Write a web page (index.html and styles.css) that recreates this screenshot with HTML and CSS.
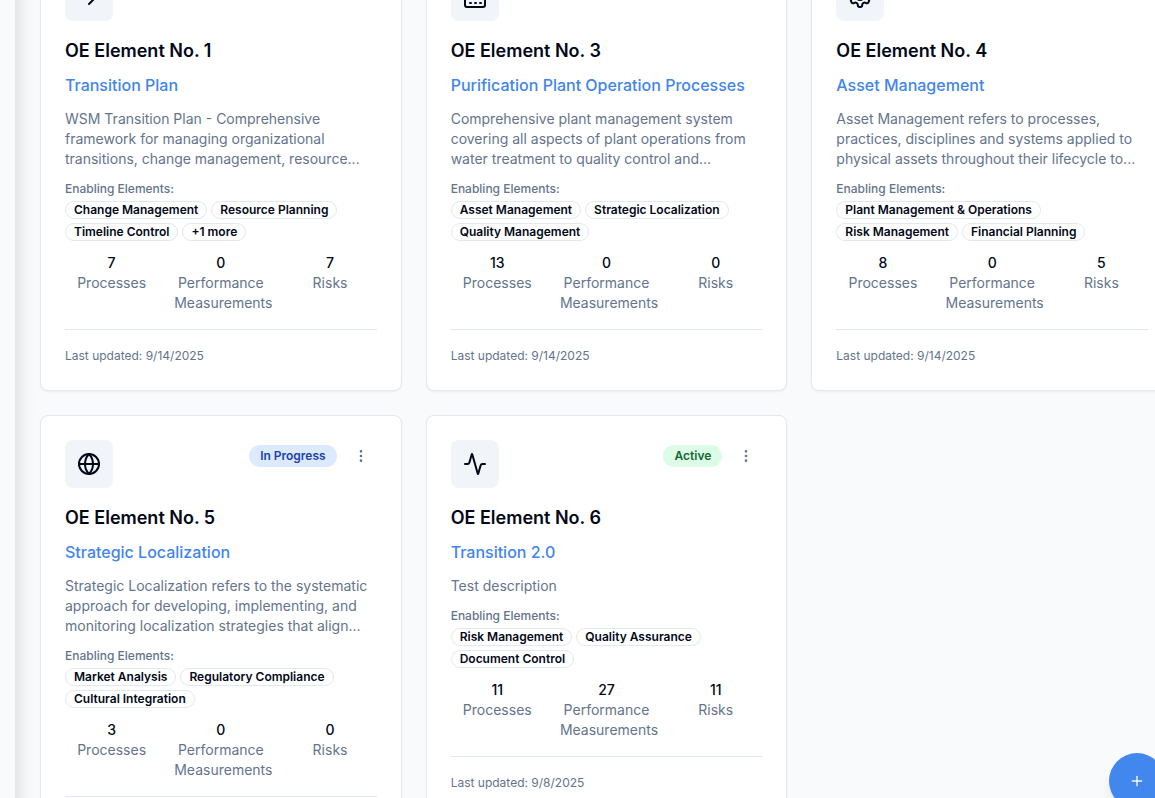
FILE: index.html
```html
<!DOCTYPE html>
<html lang="en">
<head>
<meta charset="utf-8">
<title>OE Elements</title>
<link rel="stylesheet" href="styles.css">
</head>
<body>
<div class="app">
  <aside class="sidebar" aria-label="Sidebar"></aside>
  <main class="content">
    <div class="grid">

      <article class="card">
        <header class="card-head">
          <div class="tile"><svg class="icon" viewBox="0 0 24 24"><path d="M5 12h14"/><path d="m12 5 7 7-7 7"/></svg></div>
        </header>
        <h3 class="title">OE Element No. 1</h3>
        <a class="link" href="#">Transition Plan</a>
        <p class="desc">WSM Transition Plan - Comprehensive framework for managing organizational transitions, change management, resource...</p>
        <p class="label">Enabling Elements:</p>
        <ul class="chips"><li class="chip">Change Management</li><li class="chip">Resource Planning</li><li class="chip">Timeline Control</li><li class="chip">+1 more</li></ul>
        <dl class="stats">
          <div class="stat"><dd>7</dd><dt>Processes</dt></div>
          <div class="stat"><dd>0</dd><dt>Performance Measurements</dt></div>
          <div class="stat"><dd>7</dd><dt>Risks</dt></div>
        </dl>
        <footer class="card-foot">Last updated: 9/14/2025</footer>
      </article>

      <article class="card">
        <header class="card-head">
          <div class="tile"><svg class="icon" viewBox="0 0 24 24"><path d="M2 20a2 2 0 0 0 2 2h16a2 2 0 0 0 2-2V8l-7 5V8l-7 5V4a2 2 0 0 0-2-2H4a2 2 0 0 0-2 2Z"/><path d="M17 18h1"/><path d="M12 18h1"/><path d="M7 18h1"/></svg></div>
        </header>
        <h3 class="title">OE Element No. 3</h3>
        <a class="link" href="#">Purification Plant Operation Processes</a>
        <p class="desc">Comprehensive plant management system covering all aspects of plant operations from water treatment to quality control and...</p>
        <p class="label">Enabling Elements:</p>
        <ul class="chips"><li class="chip">Asset Management</li><li class="chip">Strategic Localization</li><li class="chip">Quality Management</li></ul>
        <dl class="stats">
          <div class="stat"><dd>13</dd><dt>Processes</dt></div>
          <div class="stat"><dd>0</dd><dt>Performance Measurements</dt></div>
          <div class="stat"><dd>0</dd><dt>Risks</dt></div>
        </dl>
        <footer class="card-foot">Last updated: 9/14/2025</footer>
      </article>

      <article class="card">
        <header class="card-head">
          <div class="tile"><svg class="icon" viewBox="0 0 24 24"><path d="M12.22 2h-.44a2 2 0 0 0-2 2v.18a2 2 0 0 1-1 1.73l-.43.25a2 2 0 0 1-2 0l-.15-.08a2 2 0 0 0-2.73.73l-.22.38a2 2 0 0 0 .73 2.73l.15.1a2 2 0 0 1 1 1.72v.51a2 2 0 0 1-1 1.74l-.15.09a2 2 0 0 0-.73 2.73l.22.38a2 2 0 0 0 2.73.73l.15-.08a2 2 0 0 1 2 0l.43.25a2 2 0 0 1 1 1.73V20a2 2 0 0 0 2 2h.44a2 2 0 0 0 2-2v-.18a2 2 0 0 1 1-1.73l.43-.25a2 2 0 0 1 2 0l.15.08a2 2 0 0 0 2.73-.73l.22-.39a2 2 0 0 0-.73-2.73l-.15-.08a2 2 0 0 1-1-1.74v-.5a2 2 0 0 1 1-1.74l.15-.09a2 2 0 0 0 .73-2.73l-.22-.38a2 2 0 0 0-2.73-.73l-.15.08a2 2 0 0 1-2 0l-.43-.25a2 2 0 0 1-1-1.73V4a2 2 0 0 0-2-2z"/><circle cx="12" cy="12" r="3"/></svg></div>
        </header>
        <h3 class="title">OE Element No. 4</h3>
        <a class="link" href="#">Asset Management</a>
        <p class="desc">Asset Management refers to processes, practices, disciplines and systems applied to physical assets throughout their lifecycle to...</p>
        <p class="label">Enabling Elements:</p>
        <ul class="chips"><li class="chip">Plant Management &amp; Operations</li><li class="chip">Risk Management</li><li class="chip">Financial Planning</li></ul>
        <dl class="stats">
          <div class="stat"><dd>8</dd><dt>Processes</dt></div>
          <div class="stat"><dd>0</dd><dt>Performance Measurements</dt></div>
          <div class="stat"><dd>5</dd><dt>Risks</dt></div>
        </dl>
        <footer class="card-foot">Last updated: 9/14/2025</footer>
      </article>

      <article class="card">
        <header class="card-head">
          <div class="tile"><svg class="icon" viewBox="0 0 24 24"><circle cx="12" cy="12" r="10"/><path d="M12 2a14.5 14.5 0 0 0 0 20 14.5 14.5 0 0 0 0-20"/><path d="M2 12h20"/></svg></div>
          <div class="tools">
            <span class="badge badge-progress">In Progress</span>
            <button class="menu" type="button" aria-label="More options"><svg class="icon-sm" viewBox="0 0 24 24"><circle cx="12" cy="12" r="1"/><circle cx="12" cy="5" r="1"/><circle cx="12" cy="19" r="1"/></svg></button>
          </div>
        </header>
        <h3 class="title">OE Element No. 5</h3>
        <a class="link" href="#">Strategic Localization</a>
        <p class="desc">Strategic Localization refers to the systematic approach for developing, implementing, and monitoring localization strategies that align...</p>
        <p class="label">Enabling Elements:</p>
        <ul class="chips"><li class="chip">Market Analysis</li><li class="chip">Regulatory Compliance</li><li class="chip">Cultural Integration</li></ul>
        <dl class="stats">
          <div class="stat"><dd>3</dd><dt>Processes</dt></div>
          <div class="stat"><dd>0</dd><dt>Performance Measurements</dt></div>
          <div class="stat"><dd>0</dd><dt>Risks</dt></div>
        </dl>
        <footer class="card-foot"></footer>
      </article>

      <article class="card">
        <header class="card-head">
          <div class="tile"><svg class="icon" viewBox="0 0 24 24"><path d="M22 12h-2.48a2 2 0 0 0-1.93 1.46l-2.35 8.36a.25.25 0 0 1-.48 0L9.24 2.18a.25.25 0 0 0-.48 0l-2.35 8.36A2 2 0 0 1 4.49 12H2"/></svg></div>
          <div class="tools">
            <span class="badge badge-active">Active</span>
            <button class="menu" type="button" aria-label="More options"><svg class="icon-sm" viewBox="0 0 24 24"><circle cx="12" cy="12" r="1"/><circle cx="12" cy="5" r="1"/><circle cx="12" cy="19" r="1"/></svg></button>
          </div>
        </header>
        <h3 class="title">OE Element No. 6</h3>
        <a class="link" href="#">Transition 2.0</a>
        <p class="desc">Test description</p>
        <p class="label">Enabling Elements:</p>
        <ul class="chips"><li class="chip">Risk Management</li><li class="chip">Quality Assurance</li><li class="chip">Document Control</li></ul>
        <dl class="stats">
          <div class="stat"><dd>11</dd><dt>Processes</dt></div>
          <div class="stat"><dd>27</dd><dt>Performance Measurements</dt></div>
          <div class="stat"><dd>11</dd><dt>Risks</dt></div>
        </dl>
        <footer class="card-foot">Last updated: 9/8/2025</footer>
      </article>

    </div>
  </main>
  <button class="fab" type="button" aria-label="Add element"><svg class="icon-sm" viewBox="0 0 24 24"><path d="M5 12h14"/><path d="M12 5v14"/></svg></button>
</div>
</body>
</html>
```

FILE: styles.css
```css
* {
  box-sizing: border-box;
  margin: 0;
  padding: 0;
}

body {
  font-family: Inter, "Liberation Sans", sans-serif;
  font-size: 14px;
  line-height: 20px;
  color: #020817;
  background: #f9fafb;
}

button {
  font: inherit;
  border: 0;
  cursor: pointer;
}

.app {
  display: flex;
  height: 100vh;
  overflow: hidden;
}

/* Runs past the top and bottom so that its shadow stays even. */
.sidebar {
  flex: none;
  width: 15px;
  margin: -52px 0;
  background: #f9fafb;
  box-shadow: 0 0 20px rgba(0, 0, 0, 0.18);
  z-index: 1;
}

.content {
  flex: 1;
  min-width: 0;
  background: #f8fafc;
}

/* The grid is scrolled down and runs past the right edge. */
.grid {
  display: grid;
  grid-template-columns: repeat(3, minmax(0, 1fr));
  gap: 24px;
  margin: -52px -18px 0 25px;
}

.card {
  padding: 24px;
  background: #fff;
  border: 1px solid #e2e8f0;
  border-radius: 8px;
  box-shadow: 0 1px 2px rgba(0, 0, 0, 0.05);
}

.card-head {
  display: flex;
  justify-content: space-between;
  align-items: flex-start;
  margin-bottom: 16px;
}

.tile {
  display: grid;
  place-items: center;
  width: 48px;
  height: 48px;
  background: #f1f5f9;
  border-radius: 8px;
}

.icon,
.icon-sm {
  display: block;
  width: 24px;
  height: 24px;
  fill: none;
  stroke: currentColor;
  stroke-width: 2;
  stroke-linecap: round;
  stroke-linejoin: round;
}

.icon-sm {
  width: 16px;
  height: 16px;
}

.tools {
  display: flex;
  align-items: center;
  gap: 8px;
}

.badge {
  padding: 3px 11px;
  font-size: 12px;
  line-height: 16px;
  font-weight: 600;
  border-radius: 11px;
}

.badge-progress {
  color: #1e40af;
  background: #dbeafe;
}

.badge-active {
  color: #166534;
  background: #dcfce7;
}

.menu {
  display: grid;
  place-items: center;
  width: 32px;
  height: 32px;
  color: #64748b;
  background: none;
}

.title {
  margin-bottom: 8px;
  font-size: 18px;
  line-height: 28px;
  font-weight: 600;
}

.link {
  display: block;
  margin-bottom: 12px;
  font-size: 16px;
  line-height: 24px;
  font-weight: 500;
  color: #4285ec;
  text-decoration: none;
}

.desc {
  margin-bottom: 12px;
  color: #64748b;
}

.label {
  margin-bottom: 4px;
  font-size: 12px;
  line-height: 16px;
  font-weight: 500;
  color: #64748b;
}

.chips {
  display: flex;
  flex-wrap: wrap;
  gap: 4px;
  margin-bottom: 12px;
  list-style: none;
}

.chip {
  padding: 0 8px;
  font-size: 12px;
  line-height: 16px;
  font-weight: 600;
  border: 1px solid #e2e8f0;
  border-radius: 9px;
}

.stats {
  display: grid;
  grid-template-columns: repeat(3, minmax(0, 1fr));
  gap: 16px;
  margin-bottom: 16px;
  text-align: center;
}

.stat dd {
  font-weight: 500;
}

.stat dt {
  color: #64748b;
}

.card-foot {
  min-height: 37px;
  padding-top: 16px;
  font-size: 12px;
  color: #64748b;
  border-top: 1px solid #e2e8f0;
}

.fab {
  position: fixed;
  right: -10px;
  bottom: -11px;
  z-index: 2;
  display: grid;
  place-items: center;
  width: 56px;
  height: 56px;
  color: #f8fafc;
  background: #4287ee;
  border-radius: 50%;
  box-shadow: 0 10px 15px -3px rgba(0, 0, 0, 0.1), 0 4px 6px -4px rgba(0, 0, 0, 0.1);
}
```
